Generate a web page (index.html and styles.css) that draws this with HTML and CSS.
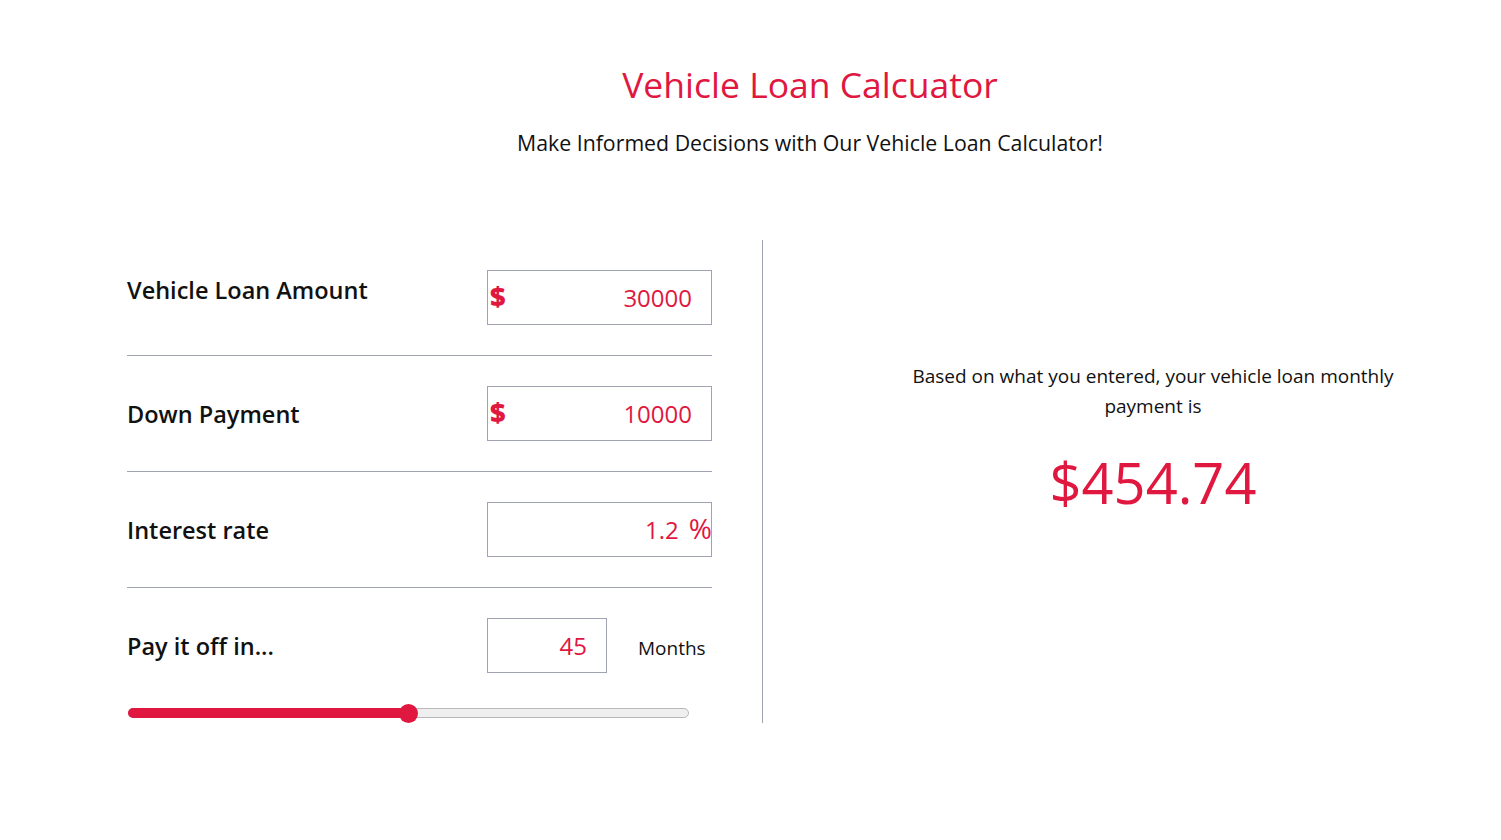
FILE: index.html
```html
<!DOCTYPE html>
<html lang="en">
<head>
<meta charset="utf-8">
<title>Vehicle Loan Calculator</title>
<link rel="stylesheet" href="styles.css">
</head>
<body>
<div class="page">
  <header class="header">
    <h1 class="title">Vehicle Loan Calcuator</h1>
    <p class="subtitle">Make Informed Decisions with Our Vehicle Loan Calculator!</p>
  </header>
  <main class="calc">
    <section class="inputs">
      <div class="row row-first">
        <div class="label label-up">Vehicle Loan Amount</div>
        <div class="field">
          <span class="prefix">$</span>
          <span class="value">30000</span>
        </div>
      </div>
      <div class="row">
        <div class="label">Down Payment</div>
        <div class="field">
          <span class="prefix">$</span>
          <span class="value">10000</span>
        </div>
      </div>
      <div class="row">
        <div class="label">Interest rate</div>
        <div class="field">
          <span class="value value-pct">1.2</span>
          <span class="suffix">%</span>
        </div>
      </div>
      <div class="row row-last">
        <div class="label">Pay it off in...</div>
        <div class="months">
          <div class="field field-small"><span class="value">45</span></div>
          <span class="months-text">Months</span>
        </div>
      </div>
      <div class="slider">
        <div class="slider-fill" style="width: 50%"></div>
        <div class="slider-thumb" style="left: 50%"></div>
      </div>
    </section>
    <div class="divider"></div>
    <section class="result">
      <p class="result-text">Based on what you entered, your vehicle loan monthly payment is</p>
      <div class="result-value">$454.74</div>
    </section>
  </main>
</div>
</body>
</html>
```

FILE: styles.css
```css
* { box-sizing: border-box; }
body {
  margin: 0;
  background: #fff;
  font-family: "Open Sans", "Noto Sans", "Liberation Sans", sans-serif;
  color: #111;
}
.page {
  margin-left: 127px;
  width: 1366px;
}
.header {
  text-align: center;
  padding-top: 58px;
}
.title {
  margin: 0;
  font-size: 35.5px;
  font-weight: 400;
  color: #e0173f;
  line-height: 52px;
}
.subtitle {
  margin: 18px 0 0;
  font-size: 21.3px;
  line-height: 30px;
}
.calc {
  display: flex;
  margin-top: 82px;
}
.inputs {
  width: 585px;
  padding-top: 30px;
}
.row {
  display: flex;
  justify-content: space-between;
  align-items: center;
  padding: 30px 0;
  border-bottom: 1px solid #a0a4b0;
}
.row-first { padding-top: 0; }
.row-last { border-bottom: none; padding-bottom: 0; }
.label {
  font-size: 23.5px;
  font-weight: 600;
  color: #111;
}
.label-up { position: relative; top: -8px; }
.field {
  width: 225px;
  height: 55px;
  border: 1px solid #a0a4b0;
  display: flex;
  align-items: center;
  color: #e0173f;
  font-size: 24px;
}
.prefix {
  font-weight: 800;
  font-size: 27px;
  padding-left: 2px;
  margin-top: -5px;
}
.value {
  margin-left: auto;
  padding-right: 19px;
}
.value-pct { padding-right: 10px; }
.suffix {
  font-size: 28px;
  font-weight: 500;
  margin-right: -1px;
  margin-top: -4px;
}
.months {
  display: flex;
  align-items: center;
  width: 225px;
}
.field-small { width: 120px; }
.months-text {
  margin-left: 31px;
  font-size: 19px;
  color: #111;
  margin-top: 4px;
}
.slider {
  position: relative;
  width: 561px;
  height: 10px;
  margin-top: 35px;
  margin-left: 1px;
  border: 1px solid #b8b8b8;
  border-radius: 5px;
  background: #efefef;
}
.slider-fill {
  position: absolute;
  left: -1px;
  top: -1px;
  height: 10px;
  border-radius: 5px 0 0 5px;
  background: #e0173f;
}
.slider-thumb {
  position: absolute;
  top: -5px;
  width: 19px;
  height: 19px;
  margin-left: -10px;
  border-radius: 50%;
  background: #e0173f;
}
.divider {
  width: 1px;
  height: 483px;
  background: #a0a4b0;
  margin-left: 50px;
}
.result {
  flex: 1;
  text-align: center;
  padding: 121px 0 0 50px;
}
.result-text {
  margin: 0 auto;
  max-width: 500px;
  font-size: 19px;
  line-height: 30px;
}
.result-value {
  margin-top: 21px;
  font-size: 56px;
  line-height: 80px;
  color: #e0173f;
}
```
